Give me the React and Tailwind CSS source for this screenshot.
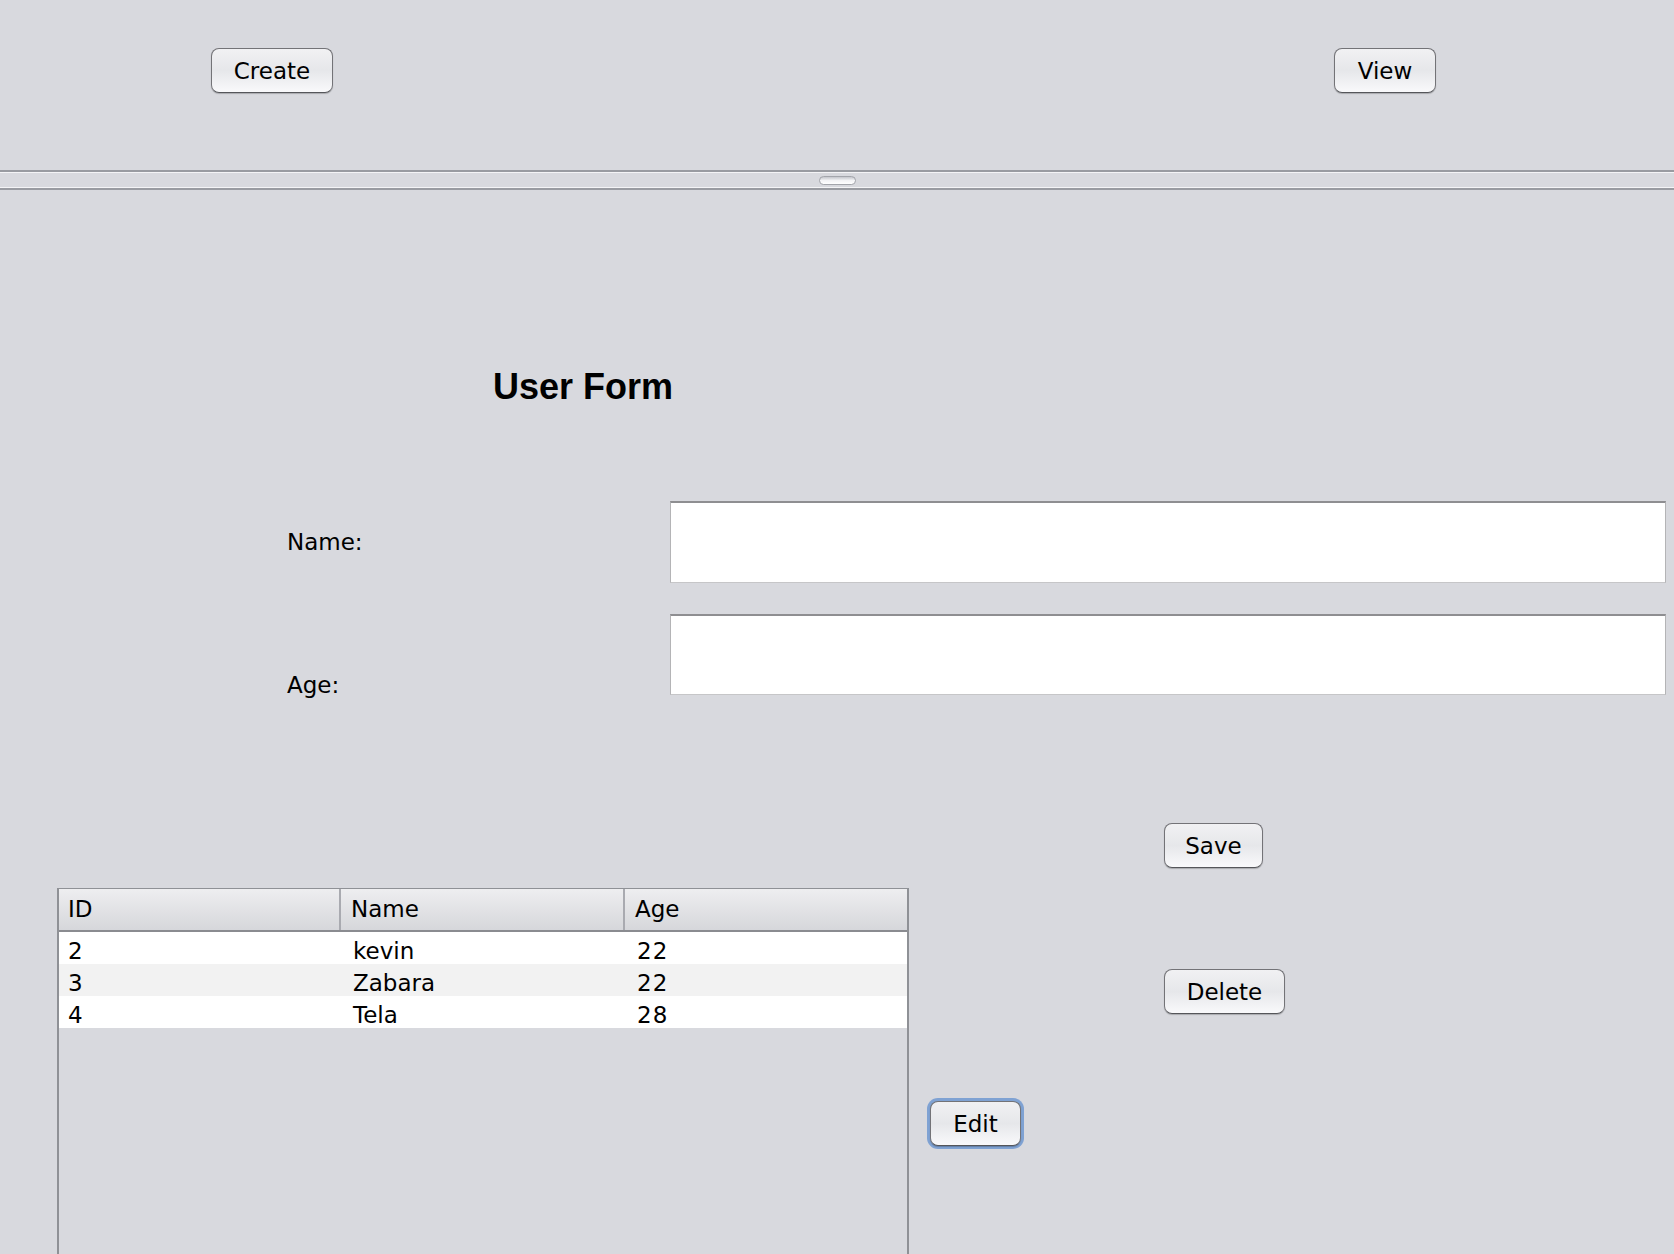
import React from "react";

const font = { fontFamily: '"DejaVu Sans", "Liberation Sans", sans-serif' };

const rows = [
  { id: 2, name: "kevin", age: 22 },
  { id: 3, name: "Zabara", age: 22 },
  { id: 4, name: "Tela", age: 28 },
];

const AquaButton = ({ children, width, focused }) => {
  const btn = (
    <button
      className={`h-[45px] ${width} pt-[2px] rounded-[8px] border border-[#737377] border-b-[#55565a] bg-gradient-to-b from-[#f1f1f3] via-[#e6e7ea] to-[#f9f9fb] shadow-[0_1px_1px_rgba(0,0,0,0.22)] text-[23px] leading-none text-black flex items-center justify-center`}
    >
      {children}
    </button>
  );
  if (!focused) return btn;
  return <div className="rounded-[11px] p-[3px] bg-[#7fa2d3]">{btn}</div>;
};

const Field = ({ height }) => (
  <div
    className={`w-[996px] ${height} bg-white border border-[#b4b4b6] border-t-2 border-t-[#8e8e91] border-b-[#c6c6c8]`}
  />
);

export default function App() {
  return (
    <div className="w-[1674px] h-[1254px] overflow-hidden bg-[#d8d9de] flex flex-col" style={font}>
      {/* top panel */}
      <div className="h-[170px] shrink-0 flex items-start pt-[48px] pl-[211px]">
        <AquaButton width="w-[122px]">Create</AquaButton>
        <div className="ml-[1001px]">
          <AquaButton width="w-[102px]">View</AquaButton>
        </div>
      </div>

      {/* split divider */}
      <div className="h-[20px] shrink-0 flex flex-col">
        <div className="h-[2px] bg-[#999ba1]" />
        <div className="h-[1px] bg-[#f4f4f6]" />
        <div className="grow flex items-center justify-center">
          <div className="w-[37px] h-[9px] rounded-full border border-[#a3a5ab] bg-gradient-to-b from-[#c4c6cc] via-[#f4f4f6] to-white" />
        </div>
        <div className="h-[1px] bg-[#f4f4f6]" />
        <div className="h-[2px] bg-[#999ba1]" />
      </div>

      {/* bottom panel */}
      <div className="grow flex flex-col">
        <h1
          className="mt-[179px] ml-[493px] text-[36px] leading-[36px] font-bold text-black"
          style={{ fontFamily: '"Liberation Sans", Arial, sans-serif' }}
        >
          User Form
        </h1>

        <div className="mt-[96px] flex items-start pl-[287px]">
          <label className="w-[383px] mt-[30px] text-[23px] leading-[23px] text-black">Name:</label>
          <Field height="h-[82px]" />
        </div>

        <div className="mt-[31px] flex items-start pl-[287px]">
          <label className="w-[383px] mt-[60px] text-[23px] leading-[23px] text-black">Age:</label>
          <Field height="h-[81px]" />
        </div>

        <div className="mt-[126px] ml-[1164px]">
          <AquaButton width="w-[99px]">Save</AquaButton>
        </div>

        <div className="mt-[20px] flex items-start pl-[57px]">
          {/* table */}
          <div className="w-[852px] h-[370px] shrink-0 border-x-2 border-t border-[#8f9196] flex flex-col">
            <div className="h-[43px] shrink-0 flex bg-gradient-to-b from-[#eeeef0] to-[#d6d7db] border-b-2 border-[#8a8b90]">
              <div className="w-[282px] flex items-center pl-[9px] text-[23px] leading-none text-black border-r-2 border-r-[#a9aab0]">
                ID
              </div>
              <div className="w-[284px] flex items-center pl-[10px] text-[23px] leading-none text-black border-r-2 border-r-[#a9aab0]">
                Name
              </div>
              <div className="grow flex items-center pl-[10px] text-[23px] leading-none text-black">Age</div>
            </div>
            {rows.map((r, i) => (
              <div
                key={r.id}
                className={`h-[32px] shrink-0 flex items-end pb-[1px] text-[23px] leading-none text-black ${
                  i % 2 === 1 ? "bg-[#f2f2f2]" : "bg-white"
                }`}
              >
                <div className="w-[282px] pl-[9px]">{r.id}</div>
                <div className="w-[284px] pl-[12px]">{r.name}</div>
                <div className="grow pl-[12px] tracking-[1px]">{r.age}</div>
              </div>
            ))}
          </div>

          <div className="ml-[18px] mt-[210px]">
            <AquaButton width="w-[91px]" focused>
              Edit
            </AquaButton>
          </div>

          <div className="ml-[140px] mt-[81px]">
            <AquaButton width="w-[121px]">Delete</AquaButton>
          </div>
        </div>
      </div>
    </div>
  );
}
